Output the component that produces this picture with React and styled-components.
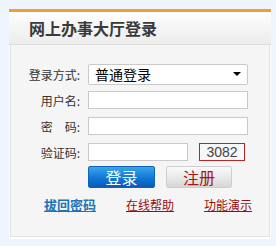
import React from "react";
import styled, { createGlobalStyle } from "styled-components";

const Global = createGlobalStyle`
  html, body { margin: 0; padding: 0; background: #eef5fc; }
  body { font-family: "Noto Sans CJK SC", "Noto Sans", sans-serif; }
  * { box-sizing: border-box; }
`;

const Page = styled.div`
  padding: 9px 5px 6px 9px;
`;

const Card = styled.div`
  width: 262px;
  background: #fff;
  border-top: 3px solid #f0a032;
  padding: 0 1px 2px 1px;
`;

const Header = styled.div`
  height: 33px;
  margin: 0 -1px;
  background: linear-gradient(#fefefe, #ececec);
  border-bottom: 1px solid #dcdcdc;
  display: flex;
  align-items: center;
  padding-left: 20px;
  font-size: 16px;
  font-weight: 700;
  color: #3a3a3a;
`;

const Panel = styled.div`
  height: 192px;
  background: #f5f5f5;
  border: 1px solid #e2e2e2;
  border-top: none;
  padding-top: 16px;
  display: flex;
  flex-direction: column;
`;

const Row = styled.div`
  display: flex;
  align-items: center;
  height: 26px;
`;

const Label = styled.label`
  width: 69px;
  margin-right: 8px;
  text-align: right;
  font-size: 12px;
  color: #333;
  white-space: pre;
`;

const Input = styled.div`
  width: ${(p) => p.$w}px;
  height: 18px;
  background: #fff;
  border: 1px solid #c9c9c9;
`;

const Select = styled.div`
  width: 160px;
  height: 21px;
  background: #fff;
  border: 1px solid #c9c9c9;
  border-radius: 2px;
  display: flex;
  align-items: center;
  justify-content: space-between;
  padding: 0 6px 0 6px;
  font-size: 14px;
  color: #000;
`;

const Arrow = styled.span`
  width: 0;
  height: 0;
  border-left: 4px solid transparent;
  border-right: 4px solid transparent;
  border-top: 4px solid #000;
`;

const Captcha = styled.div`
  margin-left: 11px;
  width: 46px;
  height: 18px;
  border: 1px solid #b8262a;
  background: #f7f7f7;
  display: flex;
  align-items: center;
  justify-content: center;
  font-family: "Liberation Sans", Arial, sans-serif;
  font-size: 14px;
  color: #444;
`;

const ButtonRow = styled.div`
  display: flex;
  padding-left: 77px;
  margin-top: 1px;
  gap: 11px;
`;

const Button = styled.button`
  width: ${(p) => p.$w}px;
  height: 22px;
  border-radius: 2px;
  font-family: "Noto Sans CJK SC", sans-serif;
  font-size: 16px;
  line-height: 20px;
  padding: 0;
  cursor: pointer;
  border: ${(p) => (p.$primary ? "1px solid #0d62bd" : "1px solid #cfcfcf")};
  background: ${(p) =>
    p.$primary
      ? "linear-gradient(#3aa6ea, #1277d6 55%, #0a5ab8)"
      : "linear-gradient(#fafafa, #e6e6e6 60%, #d6d6d6)"};
  color: ${(p) => (p.$primary ? "#fff" : "#a51515")};
`;

const Links = styled.div`
  display: flex;
  margin-top: 9px;
  padding-left: 33px;
  align-items: center;
  height: 15px;
`;

const Link = styled.a`
  font-size: ${(p) => (p.$bold ? 13 : 12)}px;
  font-weight: ${(p) => (p.$bold ? 700 : 400)};
  color: ${(p) => (p.$bold ? "#1f74b6" : "#9a0e0e")};
  text-decoration: underline;
  margin-right: ${(p) => p.$mr}px;
  cursor: pointer;
`;

export default function App() {
  return (
    <>
      <Global />
      <Page>
        <Card>
          <Header>网上办事大厅登录</Header>
          <Panel>
            <Row>
              <Label>登录方式:</Label>
              <Select>
                <span>普通登录</span>
                <Arrow />
              </Select>
            </Row>
            <Row>
              <Label>用户名:</Label>
              <Input $w={160} />
            </Row>
            <Row>
              <Label>{"密　码:"}</Label>
              <Input $w={160} />
            </Row>
            <Row>
              <Label>验证码:</Label>
              <Input $w={100} />
              <Captcha>3082</Captcha>
            </Row>
            <ButtonRow>
              <Button $primary $w={67}>登录</Button>
              <Button $w={66}>注册</Button>
            </ButtonRow>
            <Links>
              <Link $bold $mr={30}>拔回密码</Link>
              <Link $mr={30}>在线帮助</Link>
              <Link $mr={0}>功能演示</Link>
            </Links>
          </Panel>
        </Card>
      </Page>
    </>
  );
}
